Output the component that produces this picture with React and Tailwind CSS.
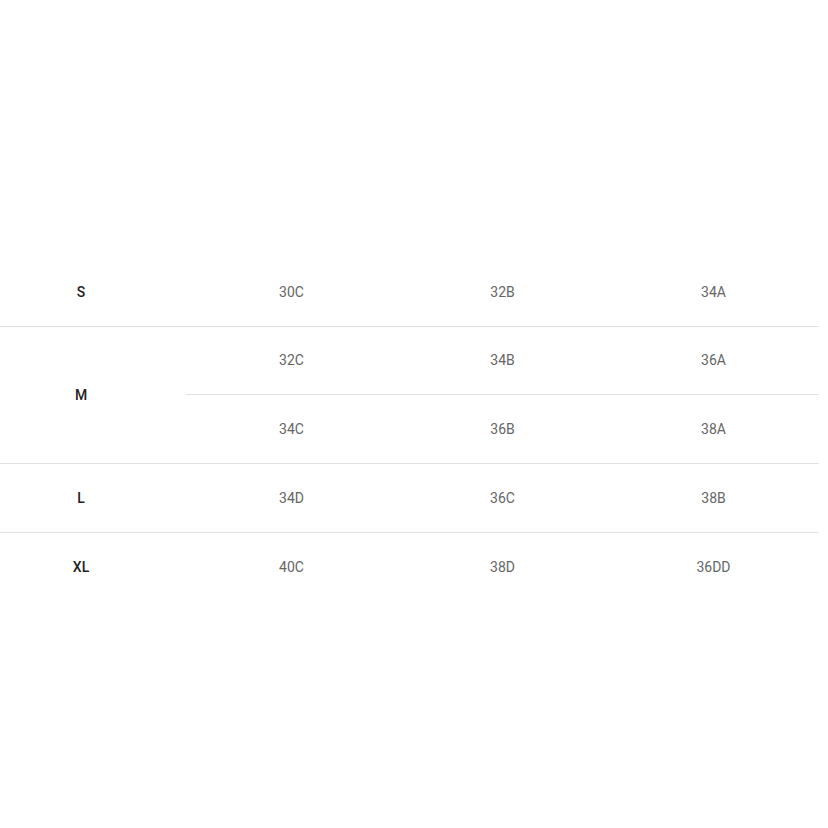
import React from 'react';

const rows = [
  { size: 'S', fits: [['30C', '32B', '34A']] },
  { size: 'M', fits: [['32C', '34B', '36A'], ['34C', '36B', '38A']] },
  { size: 'L', fits: [['34D', '36C', '38B']] },
  { size: 'XL', fits: [['40C', '38D', '36DD']] },
];

const App = () => {
  return (
    <div className="w-[828px] h-[828px] bg-white font-['Roboto',sans-serif]">
      <div className="w-[819px] pt-[258px]">
        {rows.map((row, i) => (
          <div
            key={row.size}
            className={`flex ${i < rows.length - 1 ? 'border-b border-[#e2e2e2]' : ''}`}
          >
            <div className="w-[186px] pr-[24px] flex items-center justify-center text-[14px] font-medium text-[#222]">
              {row.size}
            </div>
            <div className="flex-1 flex flex-col">
              {row.fits.map((fit, j) => (
                <div
                  key={j}
                  className={`flex h-[68px] ${j < row.fits.length - 1 ? 'border-b border-[#e2e2e2]' : ''}`}
                >
                  {fit.map((v) => (
                    <div key={v} className="flex-1 flex items-center justify-center text-[14px] text-[#666]">
                      {v}
                    </div>
                  ))}
                </div>
              ))}
            </div>
          </div>
        ))}
      </div>
    </div>
  );
};

export default App;
